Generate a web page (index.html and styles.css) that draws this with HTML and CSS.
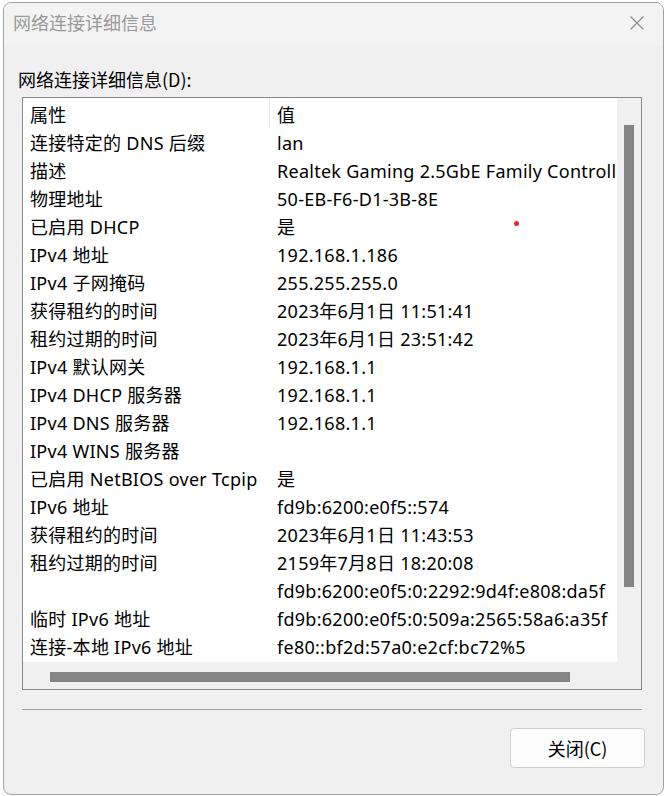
FILE: index.html
```html
<!DOCTYPE html>
<html lang="zh-CN">
<head>
<meta charset="utf-8">
<title>网络连接详细信息</title>
<link rel="stylesheet" href="styles.css">
</head>
<body>
<div class="dialog">
  <div class="titlebar">
    <span class="title">网络连接详细信息</span>
    <svg class="close-x" width="14" height="14" viewBox="0 0 14 14"><path d="M0.5 0.5 L13.5 13.5 M13.5 0.5 L0.5 13.5" stroke="#8c8c8c" stroke-width="1.1" fill="none"/></svg>
  </div>
  <div class="content">
    <div class="label">网络连接详细信息(D):</div>
    <div class="listbox">
      <div class="view">
        <div class="header">
          <div class="c1">属性</div>
          <div class="c2">值</div>
        </div>
        <div class="row"><div class="c1">连接特定的 DNS 后缀</div><div class="c2">lan</div></div>
        <div class="row"><div class="c1">描述</div><div class="c2">Realtek Gaming 2.5GbE Family Controll</div></div>
        <div class="row"><div class="c1">物理地址</div><div class="c2">50-EB-F6-D1-3B-8E</div></div>
        <div class="row"><div class="c1">已启用 DHCP</div><div class="c2">是</div></div>
        <div class="row"><div class="c1">IPv4 地址</div><div class="c2">192.168.1.186</div></div>
        <div class="row"><div class="c1">IPv4 子网掩码</div><div class="c2">255.255.255.0</div></div>
        <div class="row"><div class="c1">获得租约的时间</div><div class="c2">2023年6月1日 11:51:41</div></div>
        <div class="row"><div class="c1">租约过期的时间</div><div class="c2">2023年6月1日 23:51:42</div></div>
        <div class="row"><div class="c1">IPv4 默认网关</div><div class="c2">192.168.1.1</div></div>
        <div class="row"><div class="c1">IPv4 DHCP 服务器</div><div class="c2">192.168.1.1</div></div>
        <div class="row"><div class="c1">IPv4 DNS 服务器</div><div class="c2">192.168.1.1</div></div>
        <div class="row"><div class="c1">IPv4 WINS 服务器</div><div class="c2"></div></div>
        <div class="row"><div class="c1">已启用 NetBIOS over Tcpip</div><div class="c2">是</div></div>
        <div class="row"><div class="c1">IPv6 地址</div><div class="c2">fd9b:6200:e0f5::574</div></div>
        <div class="row"><div class="c1">获得租约的时间</div><div class="c2">2023年6月1日 11:43:53</div></div>
        <div class="row"><div class="c1">租约过期的时间</div><div class="c2">2159年7月8日 18:20:08</div></div>
        <div class="row"><div class="c1"></div><div class="c2">fd9b:6200:e0f5:0:2292:9d4f:e808:da5f</div></div>
        <div class="row"><div class="c1">临时 IPv6 地址</div><div class="c2">fd9b:6200:e0f5:0:509a:2565:58a6:a35f</div></div>
        <div class="row"><div class="c1">连接-本地 IPv6 地址</div><div class="c2">fe80::bf2d:57a0:e2cf:bc72%5</div></div>
      </div>
      <div class="vscroll"><div class="vthumb"></div></div>
      <div class="hscroll"><div class="hthumb"></div></div>
      <div class="corner"></div>
    </div>
    <div class="separator"></div>
    <div class="buttons">
      <button class="btn">关闭(C)</button>
    </div>
  </div>
  <span class="dot"></span>
</div>
</body>
</html>
```
FILE: styles.css
```css
html, body {
  margin: 0;
  padding: 0;
  background: #ffffff;
}
body {
  width: 664px;
  height: 796px;
  overflow: hidden;
  font-family: "Noto Sans", "Noto Sans CJK SC", sans-serif;
  font-size: 18px;
  color: #000;
}
.dialog {
  position: relative;
  box-sizing: border-box;
  margin: 2px 0 0 3px;
  width: 661px;
  height: 793px;
  border: 1px solid #a3a3a3;
  border-radius: 8px;
  background: #f0f0f0;
  overflow: hidden;
}
.titlebar {
  height: 43px;
  background: #f3f3f3;
  display: flex;
  align-items: center;
  justify-content: space-between;
  padding: 0 19px 0 9px;
}
.title {
  color: #999999;
  font-family: "Noto Sans CJK SC", sans-serif;
  font-size: 18px;
  line-height: 24px;
  margin-top: -5px;
}
.close-x {
  display: block;
  margin-top: -4px;
}
.content {
  padding: 0 19px 0 18px;
}
.label {
  font-family: "Noto Sans CJK SC", sans-serif;
  line-height: 24px;
  margin: 21px 0 6px -4px;
}
.listbox {
  box-sizing: border-box;
  width: 620px;
  height: 593px;
  border: 1px solid #8b8b8b;
  display: grid;
  grid-template-columns: 594px 24px;
  grid-template-rows: 564px 27px;
  background: #f0f0f0;
}
.view {
  background: #fff;
  overflow: hidden;
}
.header, .row {
  display: flex;
  white-space: nowrap;
  letter-spacing: 0.27px;
}
.header {
  height: 31px;
  line-height: 35px;
}
.header .c1 {
  border-right: 1px solid #e5e5e5;
  height: 30px;
}
.row {
  height: 28px;
  line-height: 28px;
}
.c1 {
  box-sizing: border-box;
  width: 247px;
  padding-left: 7px;
  flex: none;
}
.c2 {
  padding-left: 7px;
  flex: none;
}
.vscroll {
  background: #f0f0f0;
  padding: 27px 0 0 7px;
}
.vthumb {
  width: 10px;
  height: 462px;
  background: #858585;
}
.hscroll {
  background: #f0f0f0;
  padding: 10px 0 0 27px;
}
.hthumb {
  width: 520px;
  height: 10px;
  background: #858585;
}
.corner {
  background: #f0f0f0;
}
.separator {
  width: 620px;
  height: 1px;
  background: #a0a0a0;
  margin-top: 19px;
}
.buttons {
  display: flex;
  justify-content: flex-end;
  margin-top: 18px;
  margin-right: -1px;
}
.btn {
  width: 135px;
  height: 40px;
  border: 1px solid #d0d0d0;
  border-radius: 4px;
  background: #fdfdfd;
  font-family: "Noto Sans CJK SC", sans-serif;
  font-size: 18px;
  color: #000;
  padding: 0;
}
.dot {
  position: absolute;
  left: 510px;
  top: 218px;
  width: 5px;
  height: 5px;
  border-radius: 50%;
  background: #e8262a;
}
```
